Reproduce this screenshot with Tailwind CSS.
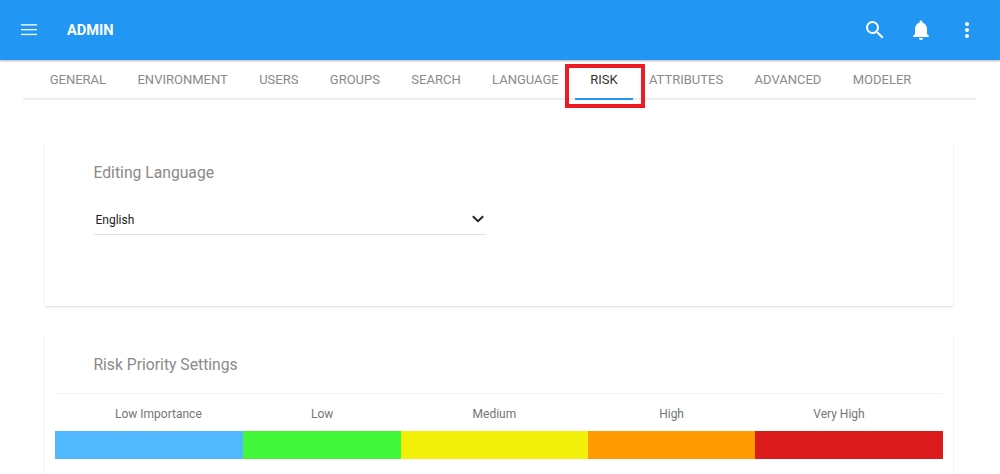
<!DOCTYPE html>
<html lang="en">

<head>
  <meta charset="UTF-8" />
  <title>Admin</title>
  <script src="https://cdn.jsdelivr.net/npm/@tailwindcss/browser@4"></script>
</head>

<body class="relative h-[474px] overflow-hidden bg-white font-['Roboto',sans-serif]">

  <!-- Top bar -->
  <header class="relative z-10 flex h-[60px] items-center bg-[#2196f3] pl-[19px] pr-[21px] shadow-[0_1px_2px_rgba(0,0,0,0.3)]">
    <svg class="h-5 w-5 text-white" viewBox="0 0 20 20" fill="currentColor">
      <rect x="2" y="4.2" width="16" height="1.3" />
      <rect x="2" y="9" width="16" height="1.3" />
      <rect x="2" y="13.8" width="16" height="1.3" />
    </svg>
    <h1 class="ml-[28px] pt-[1px] text-[14.6px] font-bold text-white">ADMIN</h1>
    <div class="ml-auto flex items-center gap-[22px]">
      <svg class="h-6 w-6 text-white" viewBox="0 0 24 24" fill="currentColor">
        <path d="M15.5 14h-.79l-.28-.27A6.47 6.47 0 0 0 16 9.5 6.5 6.5 0 1 0 9.5 16c1.61 0 3.09-.59 4.23-1.57l.27.28v.79l5 4.99L20.49 19l-4.99-5zm-6 0C7.01 14 5 11.99 5 9.5S7.01 5 9.5 5 14 7.01 14 9.5 11.99 14 9.5 14z" />
      </svg>
      <svg class="h-6 w-6 text-white" viewBox="0 0 24 24" fill="currentColor">
        <path d="M12 22c1.1 0 2-.9 2-2h-4c0 1.1.9 2 2 2zm6-6v-5c0-3.07-1.63-5.64-4.5-6.32V4c0-.83-.67-1.5-1.5-1.5s-1.5.67-1.5 1.5v.68C7.64 5.36 6 7.92 6 11v5l-2 2v1h16v-1l-2-2z" />
      </svg>
      <svg class="h-6 w-6 text-white" viewBox="0 0 24 24" fill="currentColor">
        <path d="M12 8c1.1 0 2-.9 2-2s-.9-2-2-2-2 .9-2 2 .9 2 2 2zm0 2c-1.1 0-2 .9-2 2s.9 2 2 2 2-.9 2-2-.9-2-2-2zm0 6c-1.1 0-2 .9-2 2s.9 2 2 2 2-.9 2-2-.9-2-2-2z" />
      </svg>
    </div>
  </header>

  <!-- Tabs -->
  <nav class="ml-[23px] mr-[24px] flex h-[40px] border-b-2 border-[#eeeeee] pl-[11px] pt-[2px] text-[13px] text-[#8a8a8a]">
    <a class="flex items-center px-[15.7px]">GENERAL</a>
    <a class="flex items-center px-[15.7px]">ENVIRONMENT</a>
    <a class="flex items-center px-[15.7px]">USERS</a>
    <a class="flex items-center px-[15.7px]">GROUPS</a>
    <a class="flex items-center px-[15.7px]">SEARCH</a>
    <a class="flex items-center px-[15.7px]">LANGUAGE</a>
    <a class="relative flex items-center px-[15.7px] text-[#333333]">RISK<span class="absolute -bottom-[2px] left-[0.7px] h-[2px] w-[58px] bg-[#2196f3]"></span></a>
    <a class="flex items-center px-[15.7px]">ATTRIBUTES</a>
    <a class="flex items-center px-[15.7px]">ADVANCED</a>
    <a class="flex items-center px-[15.7px]">MODELER</a>
  </nav>

  <main class="mx-[45px] mt-[42px] flex w-[908px] flex-col gap-[28px]">

    <!-- Editing language -->
    <section class="h-[164px] bg-white pl-[48.5px] pt-[20px] shadow-[0_1px_2px_rgba(0,0,0,0.14)]">
      <h2 class="text-[15.7px] leading-[22px] text-[#8a8a8a]">Editing Language</h2>
      <div class="mt-[23px] flex h-[28px] w-[392.5px] items-center justify-between border-b border-[#e0e0e0] pb-[4px] pl-[2px]">
        <span class="pt-[2px] text-[12px] text-[#212121]">English</span>
        <svg class="h-4 w-4 text-[#1a2530]" viewBox="0 0 16 16" fill="none" stroke="currentColor" stroke-width="2">
          <path d="M2.8 5.2 8 10.2l5.2-5" />
        </svg>
      </div>
    </section>

    <!-- Risk priority settings -->
    <section class="h-[140px] bg-white pl-[10.4px] pt-[19px] shadow-[0_1px_2px_rgba(0,0,0,0.14)]">
      <h2 class="pl-[38px] pt-[0.5px] text-[15.7px] leading-[22px] text-[#8a8a8a]">Risk Priority Settings</h2>
      <div class="mt-[17.5px] w-[887.5px] border-t border-[#f3f3f3]">
        <div class="mt-[11.5px] grid grid-cols-[188px_157.4px_187.3px_167px_187.8px] text-center text-[12px] leading-[16px] text-[#757575]">
          <span class="pl-[18px]">Low Importance</span>
          <span>Low</span>
          <span>Medium</span>
          <span>High</span>
          <span class="pr-[20px]">Very High</span>
        </div>
        <div class="mt-[9.5px] grid h-[28px] grid-cols-[188px_157.4px_187.3px_167px_187.8px]">
          <div class="bg-[#52b8fd]"></div>
          <div class="bg-[#43f73a]"></div>
          <div class="bg-[#f3f109]"></div>
          <div class="bg-[#ff9a00]"></div>
          <div class="bg-[#dc1c1c]"></div>
        </div>
      </div>
    </section>
  </main>

  <!-- Annotation round the active tab -->
  <div class="absolute left-[565px] top-[64px] h-[44px] w-[80px] border-[4px] border-[#ed1c24]"></div>
</body>

</html>
